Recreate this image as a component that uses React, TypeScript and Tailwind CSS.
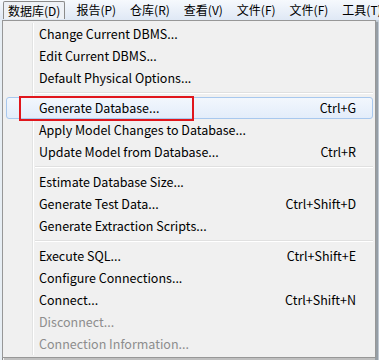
import React from "react";

type Item = { label: string; shortcut?: string; disabled?: boolean; active?: boolean } | "sep";

const ITEMS: Item[] = [
  { label: "Change Current DBMS..." },
  { label: "Edit Current DBMS..." },
  { label: "Default Physical Options..." },
  "sep",
  { label: "Generate Database...", shortcut: "Ctrl+G", active: true },
  { label: "Apply Model Changes to Database..." },
  { label: "Update Model from Database...", shortcut: "Ctrl+R" },
  "sep",
  { label: "Estimate Database Size..." },
  { label: "Generate Test Data...", shortcut: "Ctrl+Shift+D" },
  { label: "Generate Extraction Scripts..." },
  "sep",
  { label: "Execute SQL...", shortcut: "Ctrl+Shift+E" },
  { label: "Configure Connections..." },
  { label: "Connect...", shortcut: "Ctrl+Shift+N" },
  { label: "Disconnect...", disabled: true },
  { label: "Connection Information...", disabled: true },
];

const MENUS = ["报告(P)", "仓库(R)", "查看(V)", "文件(F)", "文件(F)", "工具(T)"];

export default function App() {
  return (
    <div
      className="relative h-[360px] w-[379px] overflow-hidden bg-white text-[12px] text-black"
      style={{ fontFamily: '"Noto Sans CJK SC", "Noto Sans", sans-serif' }}
    >
      {/* menubar */}
      <div className="flex h-[20px] items-center bg-gradient-to-b from-[#f6f9fd] to-[#dfe8f5] pl-[3px] whitespace-nowrap">
        <div className="mr-[-3px] flex h-[18px] items-center rounded-t-[2px] border border-b-0 border-[#8b8b8b] bg-[#eef1f6] px-[4px]">
          数据库(D)
        </div>
        {MENUS.map((m, i) => (
          <span key={i} className="ml-[14px]">{m}</span>
        ))}
      </div>

      {/* background window bits */}
      <div className="flex h-[340px]">
        <div className="w-[3px] border-r border-[#8a8a8a] bg-[#e7eef4]" />
        <div className="flex-1 bg-white" />
        <div className="w-[4px] bg-[#c9d3dd]" />
      </div>

      {/* dropdown */}
      <div className="absolute left-[2px] top-[20px] w-[374px] border border-[#979797] bg-[#f0f0f0] p-[2px] text-[12.5px] shadow-[2px_2px_1px_rgba(0,0,0,0.25)]">
        <div className="absolute bottom-[2px] left-[29px] top-[2px] w-[2px] border-l border-[#e2e3e3] bg-white" />
        {ITEMS.map((it, i) =>
          it === "sep" ? (
            <div key={i} className="flex h-[8px] items-center pl-[30px]">
              <div className="h-[2px] w-full border-t border-[#e0e0e0] bg-white" />
            </div>
          ) : (
            <div
              key={i}
              className={`relative flex h-[22px] items-center justify-between ${
                it.active
                  ? "ml-[1px] rounded-[3px] border border-[#a8c8ee] bg-gradient-to-b from-[#f2f7fd] to-[#e3edfa] pl-[32px] pr-[16px]"
                  : "pl-[34px] pr-[17px]"
              } ${it.disabled ? "text-[#8d8d8d]" : ""}`}
            >
              <span>{it.label}</span>
              {it.shortcut && <span>{it.shortcut}</span>}
            </div>
          ),
        )}
      </div>

      {/* annotation */}
      <div className="absolute left-[19px] top-[96px] h-[25px] w-[175px] border-2 border-[#e0161c]" />
    </div>
  );
}
